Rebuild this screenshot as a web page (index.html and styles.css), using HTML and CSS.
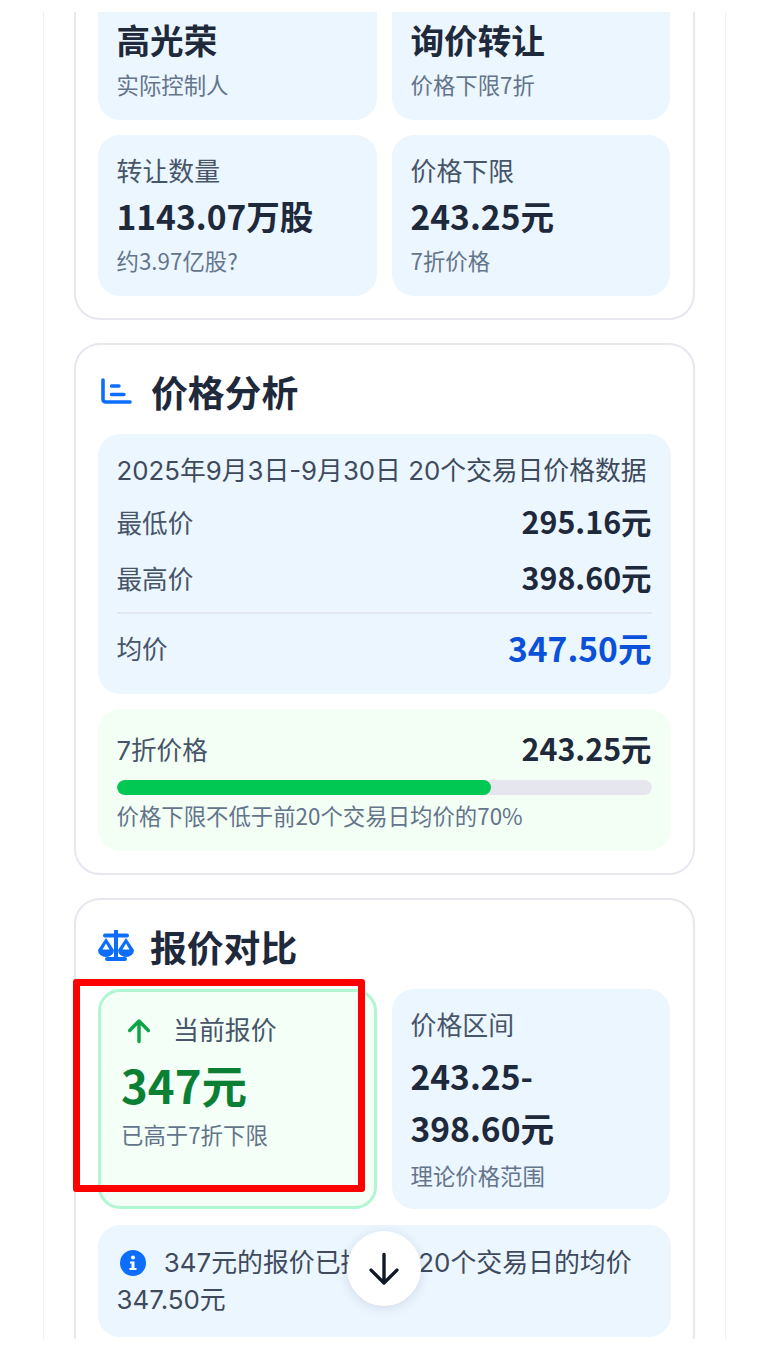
FILE: index.html
```html
<!DOCTYPE html>
<html lang="zh-CN">
<head>
<meta charset="utf-8">
<title>报价对比</title>
<link rel="stylesheet" href="styles.css">
</head>
<body>
<main class="page">
  <section class="card card--cut">
    <div class="grid">
      <div class="tile tile--cut">
        <div class="value">高光荣</div>
        <div class="sub">实际控制人</div>
      </div>
      <div class="tile tile--cut">
        <div class="value">询价转让</div>
        <div class="sub">价格下限7折</div>
      </div>
      <div class="tile">
        <div class="label">转让数量</div>
        <div class="value">1143.07万股</div>
        <div class="sub">约3.97亿股?</div>
      </div>
      <div class="tile">
        <div class="label">价格下限</div>
        <div class="value">243.25元</div>
        <div class="sub">7折价格</div>
      </div>
    </div>
  </section>

  <section class="card">
    <h2 class="card-title">
      <svg class="title-icon" viewBox="0 0 32 32" aria-hidden="true"><path d="M3 5v19.500a2.500 2.500 0 0 0 2.500 2.500H30" fill="none" stroke="#0d6efd" stroke-width="3.600" stroke-linecap="round"/><path d="M11.500 11h7.500M11.500 19.500h12.500" fill="none" stroke="#0d6efd" stroke-width="3.400" stroke-linecap="round"/></svg>
      价格分析
    </h2>
    <div class="panel">
      <div class="panel-date">2025年9月3日-9月30日 20个交易日价格数据</div>
      <div class="price-row"><span>最低价</span><strong>295.16元</strong></div>
      <div class="price-row"><span>最高价</span><strong>398.60元</strong></div>
      <div class="price-row price-row--avg"><span>均价</span><strong>347.50元</strong></div>
    </div>
    <div class="floor">
      <div class="floor-head"><span>7折价格</span><strong>243.25元</strong></div>
      <div class="bar"><div class="bar-fill" style="width:70%"></div></div>
      <div class="sub">价格下限不低于前20个交易日均价的70%</div>
    </div>
  </section>

  <section class="card">
    <h2 class="card-title">
      <svg class="title-icon title-icon--scale" viewBox="0 0 38 32" aria-hidden="true"><path d="M19 1v26M8 5.500h22M10 29h18" fill="none" stroke="#0d6efd" stroke-width="4" stroke-linecap="round"/><path d="M9 8 1 20a8 7 0 0 0 16 0Zm0 5.500L5.500 19.500h7ZM29 8l-8 12a8 7 0 0 0 16 0Zm0 5.500-3.500 6h7Z" fill="#0d6efd" fill-rule="evenodd"/></svg>
      报价对比
    </h2>
    <div class="grid grid--compare">
      <div class="tile tile--current">
        <div class="current-head">
          <svg class="up-icon" viewBox="0 0 24 24" aria-hidden="true"><path d="M12 21V4M4 11.500 12 3.500l8 8" fill="none" stroke="#0ea54a" stroke-width="3" stroke-linecap="round" stroke-linejoin="round"/></svg>
          <span class="label">当前报价</span>
        </div>
        <div class="value value--current">347元</div>
        <div class="sub">已高于7折下限</div>
      </div>
      <div class="tile tile--range">
        <div class="label">价格区间</div>
        <div class="value value--range">243.25-<br>398.60元</div>
        <div class="sub">理论价格范围</div>
      </div>
    </div>
    <div class="info">
      <svg class="info-icon" viewBox="0 0 26 26" aria-hidden="true"><circle cx="13" cy="13" r="13" fill="#0d6efd"/><circle cx="13" cy="7.500" r="2" fill="#fff"/><path d="M10 11.500h4.500V18H16.500v2h-7v-2h2v-4.500H10Z" fill="#fff"/></svg>
      347元的报价已接近前20个交易日的均价 347.50元
    </div>
  </section>

  <div class="marker"></div>
  <button class="fab" type="button" aria-label="向下滚动">
    <svg viewBox="0 0 32 32" aria-hidden="true"><path d="M16 3v25M4.500 17 16 28.500 27.500 17" fill="none" stroke="#111827" stroke-width="3" stroke-linecap="round" stroke-linejoin="round"/></svg>
  </button>
</main>
</body>
</html>
```
FILE: styles.css
```css
* { box-sizing: border-box; }
html, body { margin: 0; height: 100%; overflow: hidden; background: #fff; }
body { font-family: Inter, "Noto Sans CJK SC", sans-serif; color: #1e293b; }

.page {
  position: relative;
  width: 683px;
  height: 1327px;
  margin: 12px 0 0 43px;
  padding: 0 30px;
  overflow: hidden;
  border-left: 1px solid #eeeef3;
  border-right: 1px solid #eeeef3;
}

.card {
  margin-bottom: 23px;
  padding: 22px;
  background: #fff;
  border: 2px solid #e6e7ef;
  border-radius: 26px;
}
.card--cut { border-top: 0; border-radius: 0 0 26px 26px; padding-top: 0; }

.card-title {
  display: flex;
  align-items: center;
  margin: 0 0 19px;
  height: 48px;
  font-family: "Noto Sans CJK SC", sans-serif;
  font-size: 36.8px;
  font-weight: 700;
  line-height: 48px;
}
.title-icon { width: 32px; height: 32px; margin: 0 19px 0 2px; flex: none; }
.title-icon--scale { width: 38px; margin: 0 15px 0 -1px; }

.grid { display: grid; grid-template-columns: 279px 278px; gap: 15px; }
.grid--compare { gap: 16px 15px; margin-bottom: 16px; }

.tile {
  padding: 19px 19px 18px 18.5px;
  background: #ebf6ff;
  border-radius: 22px;
}
.tile--cut { padding-top: 2px; border-radius: 0 0 22px 22px; }
.tile--range { padding-bottom: 16px; }

.label { font-size: 25.9px; line-height: 36px; color: #475569; }
.value {
  margin-bottom: 3px;
  font-family: "Noto Sans CJK SC", sans-serif;
  font-size: 33.6px;
  font-weight: 700;
  line-height: 51px;
  color: #1e293b;
}
.value--range { line-height: 52px; margin: 5.5px 0; }
.sub {
  margin: -1px 0 1px;
  font-family: "Noto Sans CJK SC", sans-serif;
  font-size: 22.4px;
  line-height: 34px;
  color: #64748b;
}

.tile--current {
  padding: 20px 20px;
  background: #f3fff7;
  border: 3px solid #b0f6d2;
}
.current-head { display: flex; align-items: center; gap: 20px; height: 38px; padding-left: 4px; }
.up-icon { width: 28px; height: 28px; flex: none; }
.value--current { font-size: 45.5px; line-height: 60px; margin: 4px 0; color: #0b8035; }

.panel { padding: 19px 19.5px 3px 18.5px; background: #ebf6ff; border-radius: 22px; }
.panel-date { font-size: 25.8px; line-height: 36px; color: #3f4a5c; margin-bottom: 9px; }
.price-row {
  display: flex;
  justify-content: space-between;
  align-items: center;
  height: 46px;
  margin-bottom: 10px;
  font-size: 25.6px;
  color: #475569;
}
.price-row strong {
  font-family: "Noto Sans CJK SC", sans-serif;
  font-size: 30.4px;
  font-weight: 700;
  color: #1e293b;
}
.price-row--avg {
  height: 60px;
  margin: 12px 0 19px;
  padding-top: 9px;
  border-top: 2px solid #e2e6ee;
}
.price-row--avg strong { font-size: 33.6px; color: #0b50d8; }

.floor { margin-top: 15px; padding: 18px 19.5px 18px 18.5px; background: #f3fff5; border-radius: 22px; }
.floor-head {
  display: flex;
  justify-content: space-between;
  align-items: center;
  height: 42px;
  font-size: 25.6px;
  color: #475569;
}
.floor-head strong {
  font-family: "Noto Sans CJK SC", sans-serif;
  font-size: 30.4px;
  font-weight: 700;
  color: #1e293b;
}
.bar { height: 15px; margin: 11px 0 4px; background: #e5e6ee; border-radius: 8px; overflow: hidden; }
.bar-fill { height: 100%; background: #00c853; border-radius: 8px; }

.info {
  padding: 19px 19px 19px 18.5px;
  background: #ebf6ff;
  border-radius: 22px;
  font-size: 25.9px;
  line-height: 37px;
  color: #3f4a5c;
}
.info-icon { width: 26px; height: 26px; margin: 0 11px 0 3px; vertical-align: -4px; }

.marker {
  position: absolute;
  left: 29px;
  top: 967px;
  width: 292px;
  height: 213px;
  border: 7px solid #ff0000;
  border-radius: 3px;
}
.fab {
  position: absolute;
  left: 303px;
  top: 1219px;
  width: 74px;
  height: 75px;
  padding: 19px;
  background: #fff;
  border: 0;
  border-radius: 50%;
  box-shadow: 0 2px 12px rgba(60, 60, 100, 0.14);
}
.fab svg { display: block; width: 36px; height: 36px; }
```
